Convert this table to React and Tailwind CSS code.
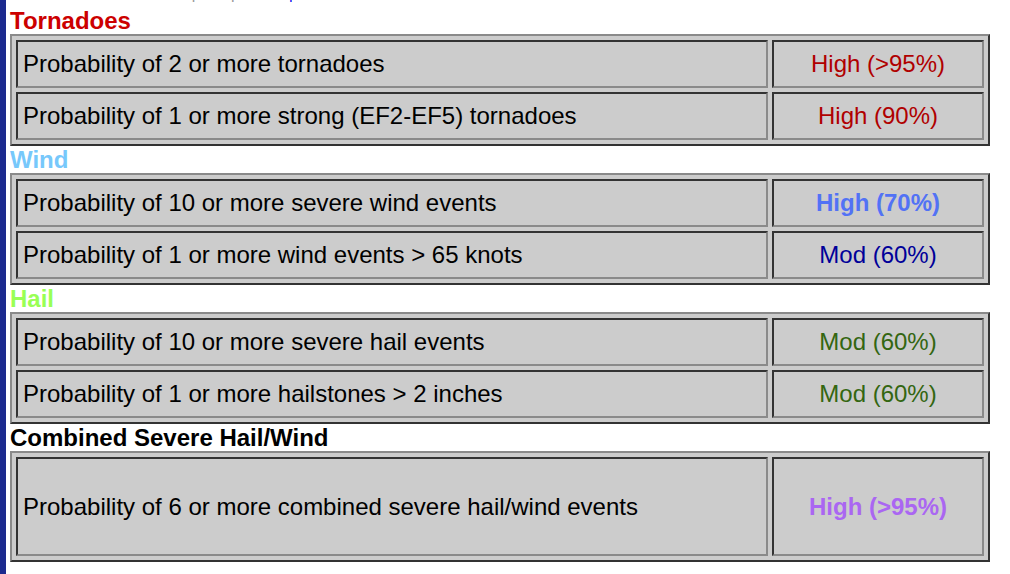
import React from 'react';

// --- Dados das seções de probabilidade ---
const secoes = [
  {
    titulo: 'Tornadoes',
    corTitulo: 'text-[#cc0000]',
    linhas: [
      { texto: 'Probability of 2 or more tornadoes', valor: 'High (>95%)', cor: 'text-[#b00000]', bold: false },
      { texto: 'Probability of 1 or more strong (EF2-EF5) tornadoes', valor: 'High (90%)', cor: 'text-[#b00000]', bold: false },
    ],
  },
  {
    titulo: 'Wind',
    corTitulo: 'text-[#77c8fb]',
    linhas: [
      { texto: 'Probability of 10 or more severe wind events', valor: 'High (70%)', cor: 'text-[#5272f5]', bold: true },
      { texto: 'Probability of 1 or more wind events > 65 knots', valor: 'Mod (60%)', cor: 'text-[#000099]', bold: false },
    ],
  },
  {
    titulo: 'Hail',
    corTitulo: 'text-[#99ff55]',
    linhas: [
      { texto: 'Probability of 10 or more severe hail events', valor: 'Mod (60%)', cor: 'text-[#336611]', bold: false },
      { texto: 'Probability of 1 or more hailstones > 2 inches', valor: 'Mod (60%)', cor: 'text-[#336611]', bold: false },
    ],
  },
  {
    titulo: 'Combined Severe Hail/Wind',
    corTitulo: 'text-black',
    alta: true,
    linhas: [
      { texto: 'Probability of 6 or more combined severe hail/wind events', valor: 'High (>95%)', cor: 'text-[#aa66f2]', bold: true },
    ],
  },
];

const Celula = ({ children, className, alta }) => (
  <div
    className={`${alta ? 'h-[99px]' : 'h-[48px]'} flex items-center bg-[#cccccc] border-2 border-t-[#333333] border-l-[#333333] border-b-[#8a8a8a] border-r-[#8a8a8a] ${className}`}
  >
    {children}
  </div>
);

const App = () => {
  return (
    <div className="min-h-screen flex bg-white" style={{ fontFamily: '"Liberation Sans", Arial, sans-serif' }}>
      <div className="w-[6px] bg-[#1c2a8e] shrink-0"></div>
      <div className="pl-[4px]">
        {/* linha cortada no topo */}
        <div className="h-[7px] overflow-hidden flex items-end">
          <p className="text-[16px] leading-[22px] pb-[2px] text-[#9a9a9a] whitespace-nowrap pl-[20px]">
            <span className="text-[#dd8888]">Note:</span> Click for the complete product <span className="text-[#0000ee]">|</span> text for more details of outlook
          </p>
        </div>

        {secoes.map((secao) => (
          <div key={secao.titulo}>
            <h2 className={`text-[24px] leading-[27px] font-bold ${secao.corTitulo}`}>{secao.titulo}</h2>
            <div className="w-[980px] bg-[#cccccc] border-2 border-t-[#8a8a8a] border-l-[#8a8a8a] border-b-[#333333] border-r-[#333333] p-1 grid grid-cols-[752px_212px] gap-1">
              {secao.linhas.map((linha) => (
                <React.Fragment key={linha.texto}>
                  <Celula alta={secao.alta} className="pl-[5px] text-[24px] text-black">
                    {linha.texto}
                  </Celula>
                  <Celula alta={secao.alta} className={`justify-center text-[24px] ${linha.cor} ${linha.bold ? 'font-bold' : ''}`}>
                    {linha.valor}
                  </Celula>
                </React.Fragment>
              ))}
            </div>
          </div>
        ))}
      </div>
    </div>
  );
};

export default App;
